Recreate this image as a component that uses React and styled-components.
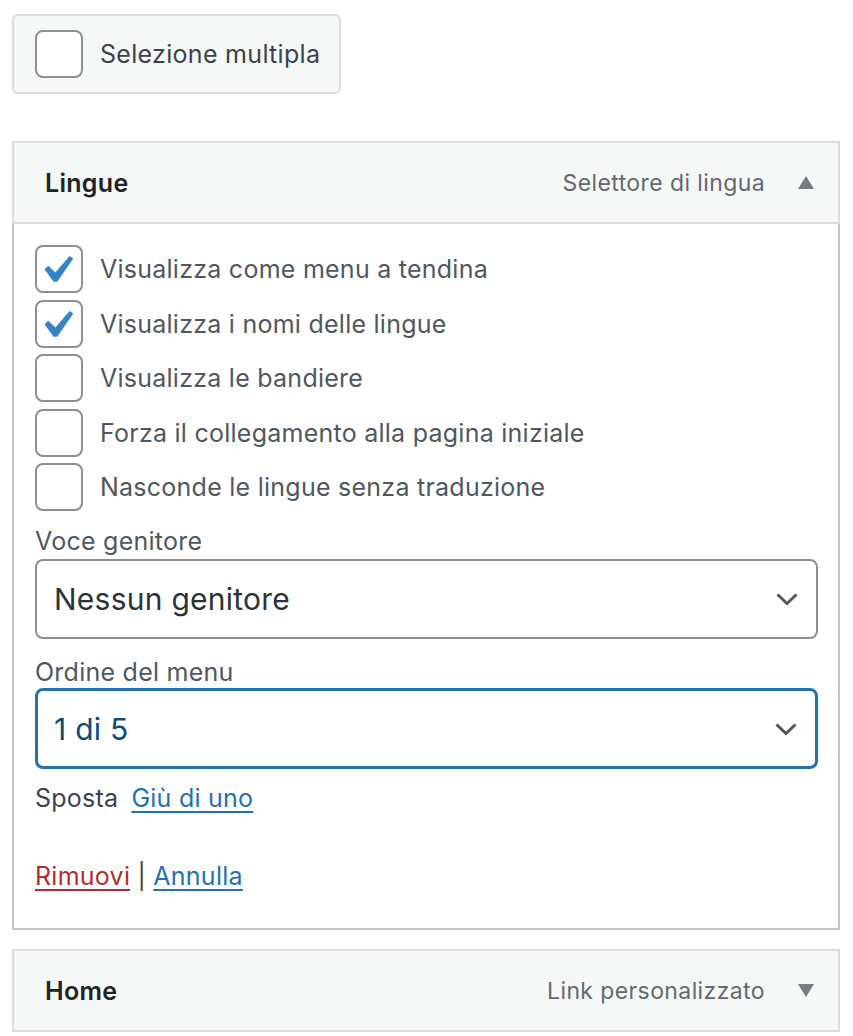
import React from 'react';
import styled, { createGlobalStyle } from 'styled-components';

const GlobalStyle = createGlobalStyle`
  body {
    margin: 0;
    background: #ffffff;
    font-family: Inter, "Liberation Sans", sans-serif;
  }
`;

const Page = styled.div`
  display: flex;
  flex-direction: column;
  padding: 14px 13px 0 12px;
`;

const BulkButton = styled.label`
  display: flex;
  align-items: center;
  gap: 17px;
  align-self: flex-start;
  box-sizing: border-box;
  width: 329px;
  height: 80px;
  padding: 0 21px;
  background: #f6f7f7;
  border: 2px solid #dcdcde;
  border-radius: 6px;
  color: #3c434a;
  font-size: 25px;
  letter-spacing: 0.3px;
  white-space: nowrap;
`;

const Box = styled.span`
  box-sizing: border-box;
  flex-shrink: 0;
  width: 48px;
  height: 48px;
  display: flex;
  align-items: center;
  justify-content: center;
  background: #fff;
  border: 2px solid #8c8f94;
  border-radius: 8px;
`;

const Panel = styled.div`
  margin-top: ${(p) => p.$top}px;
  display: flex;
  flex-direction: column;
`;

const PanelHeader = styled.div`
  box-sizing: border-box;
  height: ${(p) => p.$h}px;
  display: flex;
  align-items: center;
  padding: 0 24px 0 31px;
  background: #f6f7f7;
  border: 2px solid #dcdcde;
`;

const Title = styled.span`
  flex: 1;
  font-size: 25px;
  letter-spacing: 0.3px;
  font-weight: 600;
  color: #1d2327;
`;

const Type = styled.span`
  font-size: 23px;
  letter-spacing: 0.4px;
  color: #646970;
  margin-right: 33px;
`;

const Triangle = styled.span`
  width: 0;
  height: 0;
  border-left: 8px solid transparent;
  border-right: 8px solid transparent;
  ${(p) =>
    p.$up
      ? 'border-bottom: 13px solid #787c82;'
      : 'border-top: 13px solid #787c82;'}
`;

const PanelBody = styled.div`
  box-sizing: border-box;
  display: flex;
  flex-direction: column;
  padding: 21px 20px 37px 21px;
  border: 2px solid #c3c4c7;
  border-top: none;
`;

const Options = styled.div`
  display: flex;
  flex-direction: column;
  gap: 6.6px;
`;

const Option = styled.label`
  display: flex;
  align-items: center;
  gap: 17px;
  font-size: 25px;
  letter-spacing: 0.25px;
  color: #50575e;
`;

const FieldLabel = styled.div`
  margin-top: ${(p) => p.$top}px;
  font-size: 25px;
  letter-spacing: 0.25px;
  line-height: 32px;
  color: #50575e;
`;

const Select = styled.div`
  box-sizing: border-box;
  margin-top: ${(p) => (p.$focus ? 0 : 2)}px;
  height: ${(p) => (p.$focus ? 81 : 80)}px;
  display: flex;
  align-items: center;
  justify-content: space-between;
  padding: 0 17px 0 ${(p) => (p.$focus ? 16 : 17)}px;
  border: ${(p) => (p.$focus ? '3px solid #2271b1' : '2px solid #8c8f94')};
  border-radius: 8px;
  font-size: 30px;
  letter-spacing: 0.25px;
  color: ${(p) => (p.$focus ? '#0a4b78' : '#2c3338')};
`;

const MoveRow = styled.div`
  margin-top: 14px;
  display: flex;
  gap: 13px;
  font-size: 25px;
  letter-spacing: 0.25px;
  color: #3c434a;
`;

const Link = styled.a`
  color: ${(p) => (p.$danger ? '#b32d2e' : '#2271b1')};
  text-decoration: underline;
  text-decoration-thickness: 2px;
  text-underline-offset: 4px;
`;

const Actions = styled.div`
  margin-top: 48px;
  font-size: 25px;
  letter-spacing: 0.25px;
  color: #3c434a;
`;

function Check() {
  return (
    <svg width="36" height="30" viewBox="4.5 4.2 13 10.8">
      <path d="M14.83 4.89l1.34.94-5.81 8.38H9.02L5.78 9.67l1.34-1.25 2.57 2.4z" fill="#3582c4" />
    </svg>
  );
}

function Chevron() {
  return (
    <svg width="24" height="14" viewBox="0 0 24 14">
      <path d="M2.5 2.5l9.5 9 9.5-9" fill="none" stroke="#50575e" strokeWidth="3" />
    </svg>
  );
}

const options = [
  ['Visualizza come menu a tendina', true],
  ['Visualizza i nomi delle lingue', true],
  ['Visualizza le bandiere', false],
  ['Forza il collegamento alla pagina iniziale', false],
  ['Nasconde le lingue senza traduzione', false],
];

export default function App() {
  return (
    <Page>
      <GlobalStyle />
      <BulkButton>
        <Box />
        Selezione multipla
      </BulkButton>

      <Panel $top={47}>
        <PanelHeader $h={83}>
          <Title>Lingue</Title>
          <Type>Selettore di lingua</Type>
          <Triangle $up />
        </PanelHeader>
        <PanelBody>
          <Options>
            {options.map(([text, on]) => (
              <Option key={text}>
                <Box>{on && <Check />}</Box>
                {text}
              </Option>
            ))}
          </Options>
          <FieldLabel $top={14}>Voce genitore</FieldLabel>
          <Select>
            Nessun genitore
            <Chevron />
          </Select>
          <FieldLabel $top={17}>Ordine del menu</FieldLabel>
          <Select $focus>
            1 di 5
            <Chevron />
          </Select>
          <MoveRow>
            Sposta
            <Link href="#">Giù di uno</Link>
          </MoveRow>
          <Actions>
            <Link href="#" $danger>Rimuovi</Link> | <Link href="#">Annulla</Link>
          </Actions>
        </PanelBody>
      </Panel>

      <Panel $top={19}>
        <PanelHeader $h={83}>
          <Title>Home</Title>
          <Type>Link personalizzato</Type>
          <Triangle />
        </PanelHeader>
      </Panel>
    </Page>
  );
}
